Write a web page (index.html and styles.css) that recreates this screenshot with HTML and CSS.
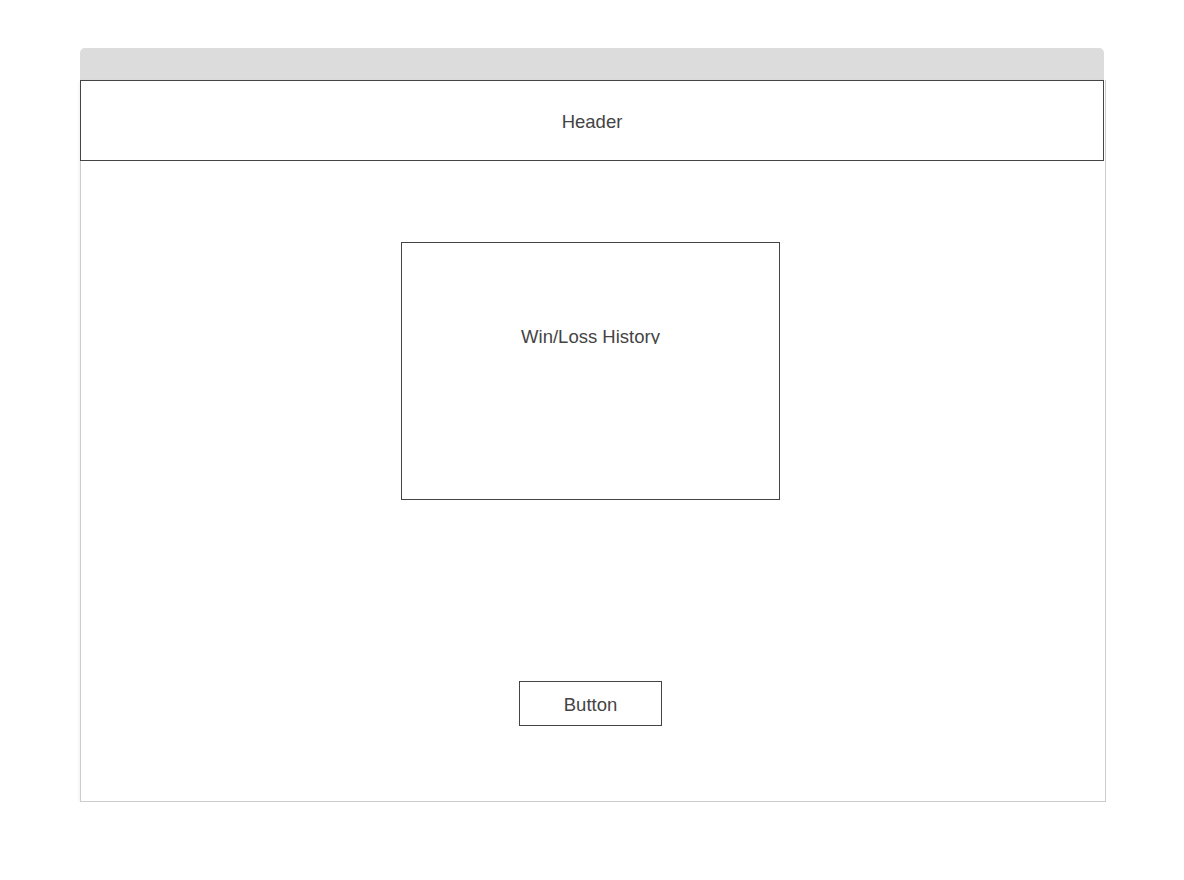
FILE: index.html
```html
<!DOCTYPE html>
<html lang="en">
<head>
<meta charset="utf-8">
<title>Win/Loss</title>
<link rel="stylesheet" href="styles.css">
</head>
<body>
<div class="window">
  <div class="titlebar"></div>
  <div class="frame">
    <div class="header">Header</div>
    <div class="history">
      <div class="history-label">Win/Loss History</div>
    </div>
    <div class="button">Button</div>
  </div>
</div>
</body>
</html>
```
FILE: styles.css
```css
html, body {
  margin: 0;
  padding: 0;
  background: #ffffff;
}
body {
  font-family: "Liberation Sans", Arial, sans-serif;
  font-size: 18.5px;
  line-height: 21px;
  color: #444444;
}
.window {
  width: 1026px;
  margin: 48px 0 0 80px;
}
.titlebar {
  width: 1024px;
  height: 32px;
  background: #dcdcdc;
  border-radius: 5px 5px 0 0;
}
.frame {
  box-sizing: border-box;
  width: 1026px;
  border: 1px solid #cccccc;
  border-top: none;
  box-shadow: -1px 1px 3px rgba(0, 0, 0, 0.06);
  display: flex;
  flex-direction: column;
  align-items: flex-start;
  padding-bottom: 75px;
}
.header {
  box-sizing: border-box;
  width: 1024px;
  height: 81px;
  margin-left: -1px;
  padding-top: 2px;
  border: 1px solid #444444;
  display: flex;
  align-items: center;
  justify-content: center;
}
.history {
  box-sizing: border-box;
  width: 379px;
  height: 258px;
  margin: 81px 0 0 320px;
  border: 1px solid #444444;
}
.history-label {
  margin-top: 83px;
  height: 18px;
  overflow: hidden;
  text-align: center;
}
.button {
  box-sizing: border-box;
  width: 143px;
  height: 45px;
  margin: 181px 0 0 438px;
  padding-top: 2px;
  border: 1px solid #444444;
  display: flex;
  align-items: center;
  justify-content: center;
}
```
